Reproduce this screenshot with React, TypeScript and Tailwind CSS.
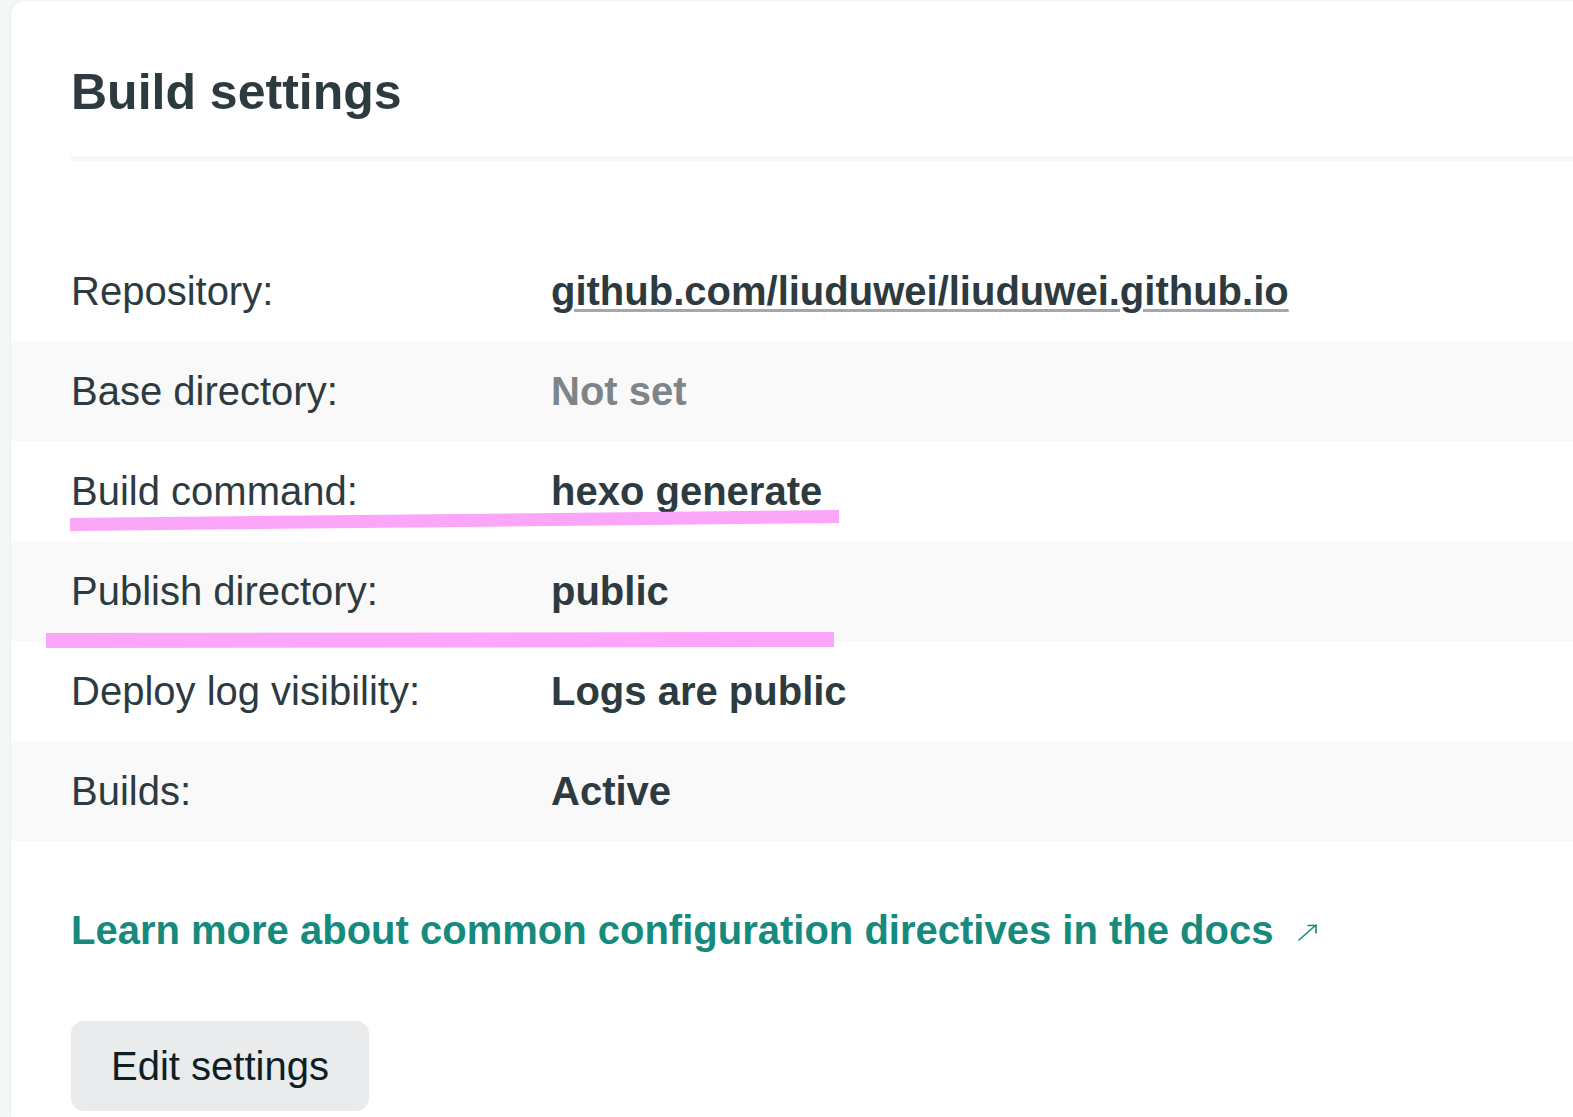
import React from "react";

const rows: { label: string; value: React.ReactNode; gray: boolean }[] = [
  {
    label: "Repository:",
    value: (
      <a
        href="#"
        className="font-bold text-[#2d3b41] underline decoration-[#a4a8ab] decoration-[3px] underline-offset-[4px]"
      >
        github.com/liuduwei/liuduwei.github.io
      </a>
    ),
    gray: false,
  },
  { label: "Base directory:", value: <span className="font-bold text-[#7d8589]">Not set</span>, gray: true },
  { label: "Build command:", value: <span className="font-bold">hexo generate</span>, gray: false },
  { label: "Publish directory:", value: <span className="font-bold">public</span>, gray: true },
  { label: "Deploy log visibility:", value: <span className="font-bold">Logs are public</span>, gray: false },
  { label: "Builds:", value: <span className="font-bold">Active</span>, gray: true },
];

export default function App() {
  return (
    <div className="relative min-h-screen w-full overflow-hidden bg-[#f2f8f8] pl-[11px] pt-[1px] font-['Liberation_Sans',Arial,sans-serif] text-[#2d3b41]">
      <div className="min-h-[1116px] rounded-tl-[14px] bg-white shadow-[0_0_3px_rgba(40,90,90,0.08)]">
        <div className="pl-[60px]">
          <h2 className="pt-[63px] text-[50px] font-bold leading-[56px] text-[#2d3b41]">Build settings</h2>
          <div className="mt-[36px] h-[5px] bg-[#f6f7f7]" />
        </div>

        <div className="mt-[80px]">
          {rows.map((r) => (
            <div
              key={r.label}
              className={`flex h-[100px] items-center pl-[60px] text-[40px] leading-[46px] ${
                r.gray ? "bg-[#f9f9f9]" : "bg-white"
              }`}
            >
              <div className="w-[480px] shrink-0">{r.label}</div>
              <div>{r.value}</div>
            </div>
          ))}
        </div>

        <div className="mt-[66px] pl-[60px]">
          <a href="#" className="inline-flex items-center text-[40px] font-bold leading-[46px] text-[#178a7e]">
            Learn more about common configuration directives in the docs
            <svg
              className="ml-[24px] mt-[4px]"
              width="22"
              height="20"
              viewBox="0 0 22 20"
              fill="none"
              stroke="#178a7e"
              strokeWidth="1.6"
              strokeLinecap="round"
            >
              <path d="M2 18 L19 3" />
              <path d="M11 3.5 H19 V11" />
            </svg>
          </a>
        </div>

        <div className="mt-[68px] pl-[60px]">
          <button className="flex h-[90px] items-center rounded-[13px] bg-[#e9ebed] px-[40px] text-[40px] leading-[46px] text-[#0e1e25]">
            Edit settings
          </button>
        </div>
      </div>

      <svg className="pointer-events-none absolute left-0 top-0" width="1573" height="1117">
        <polygon points="70,518 839,510 839,523 70,531" fill="#fba6f8" />
        <polygon points="46,633 834,632 834,647 46,648" fill="#fba6f8" />
      </svg>
    </div>
  );
}
